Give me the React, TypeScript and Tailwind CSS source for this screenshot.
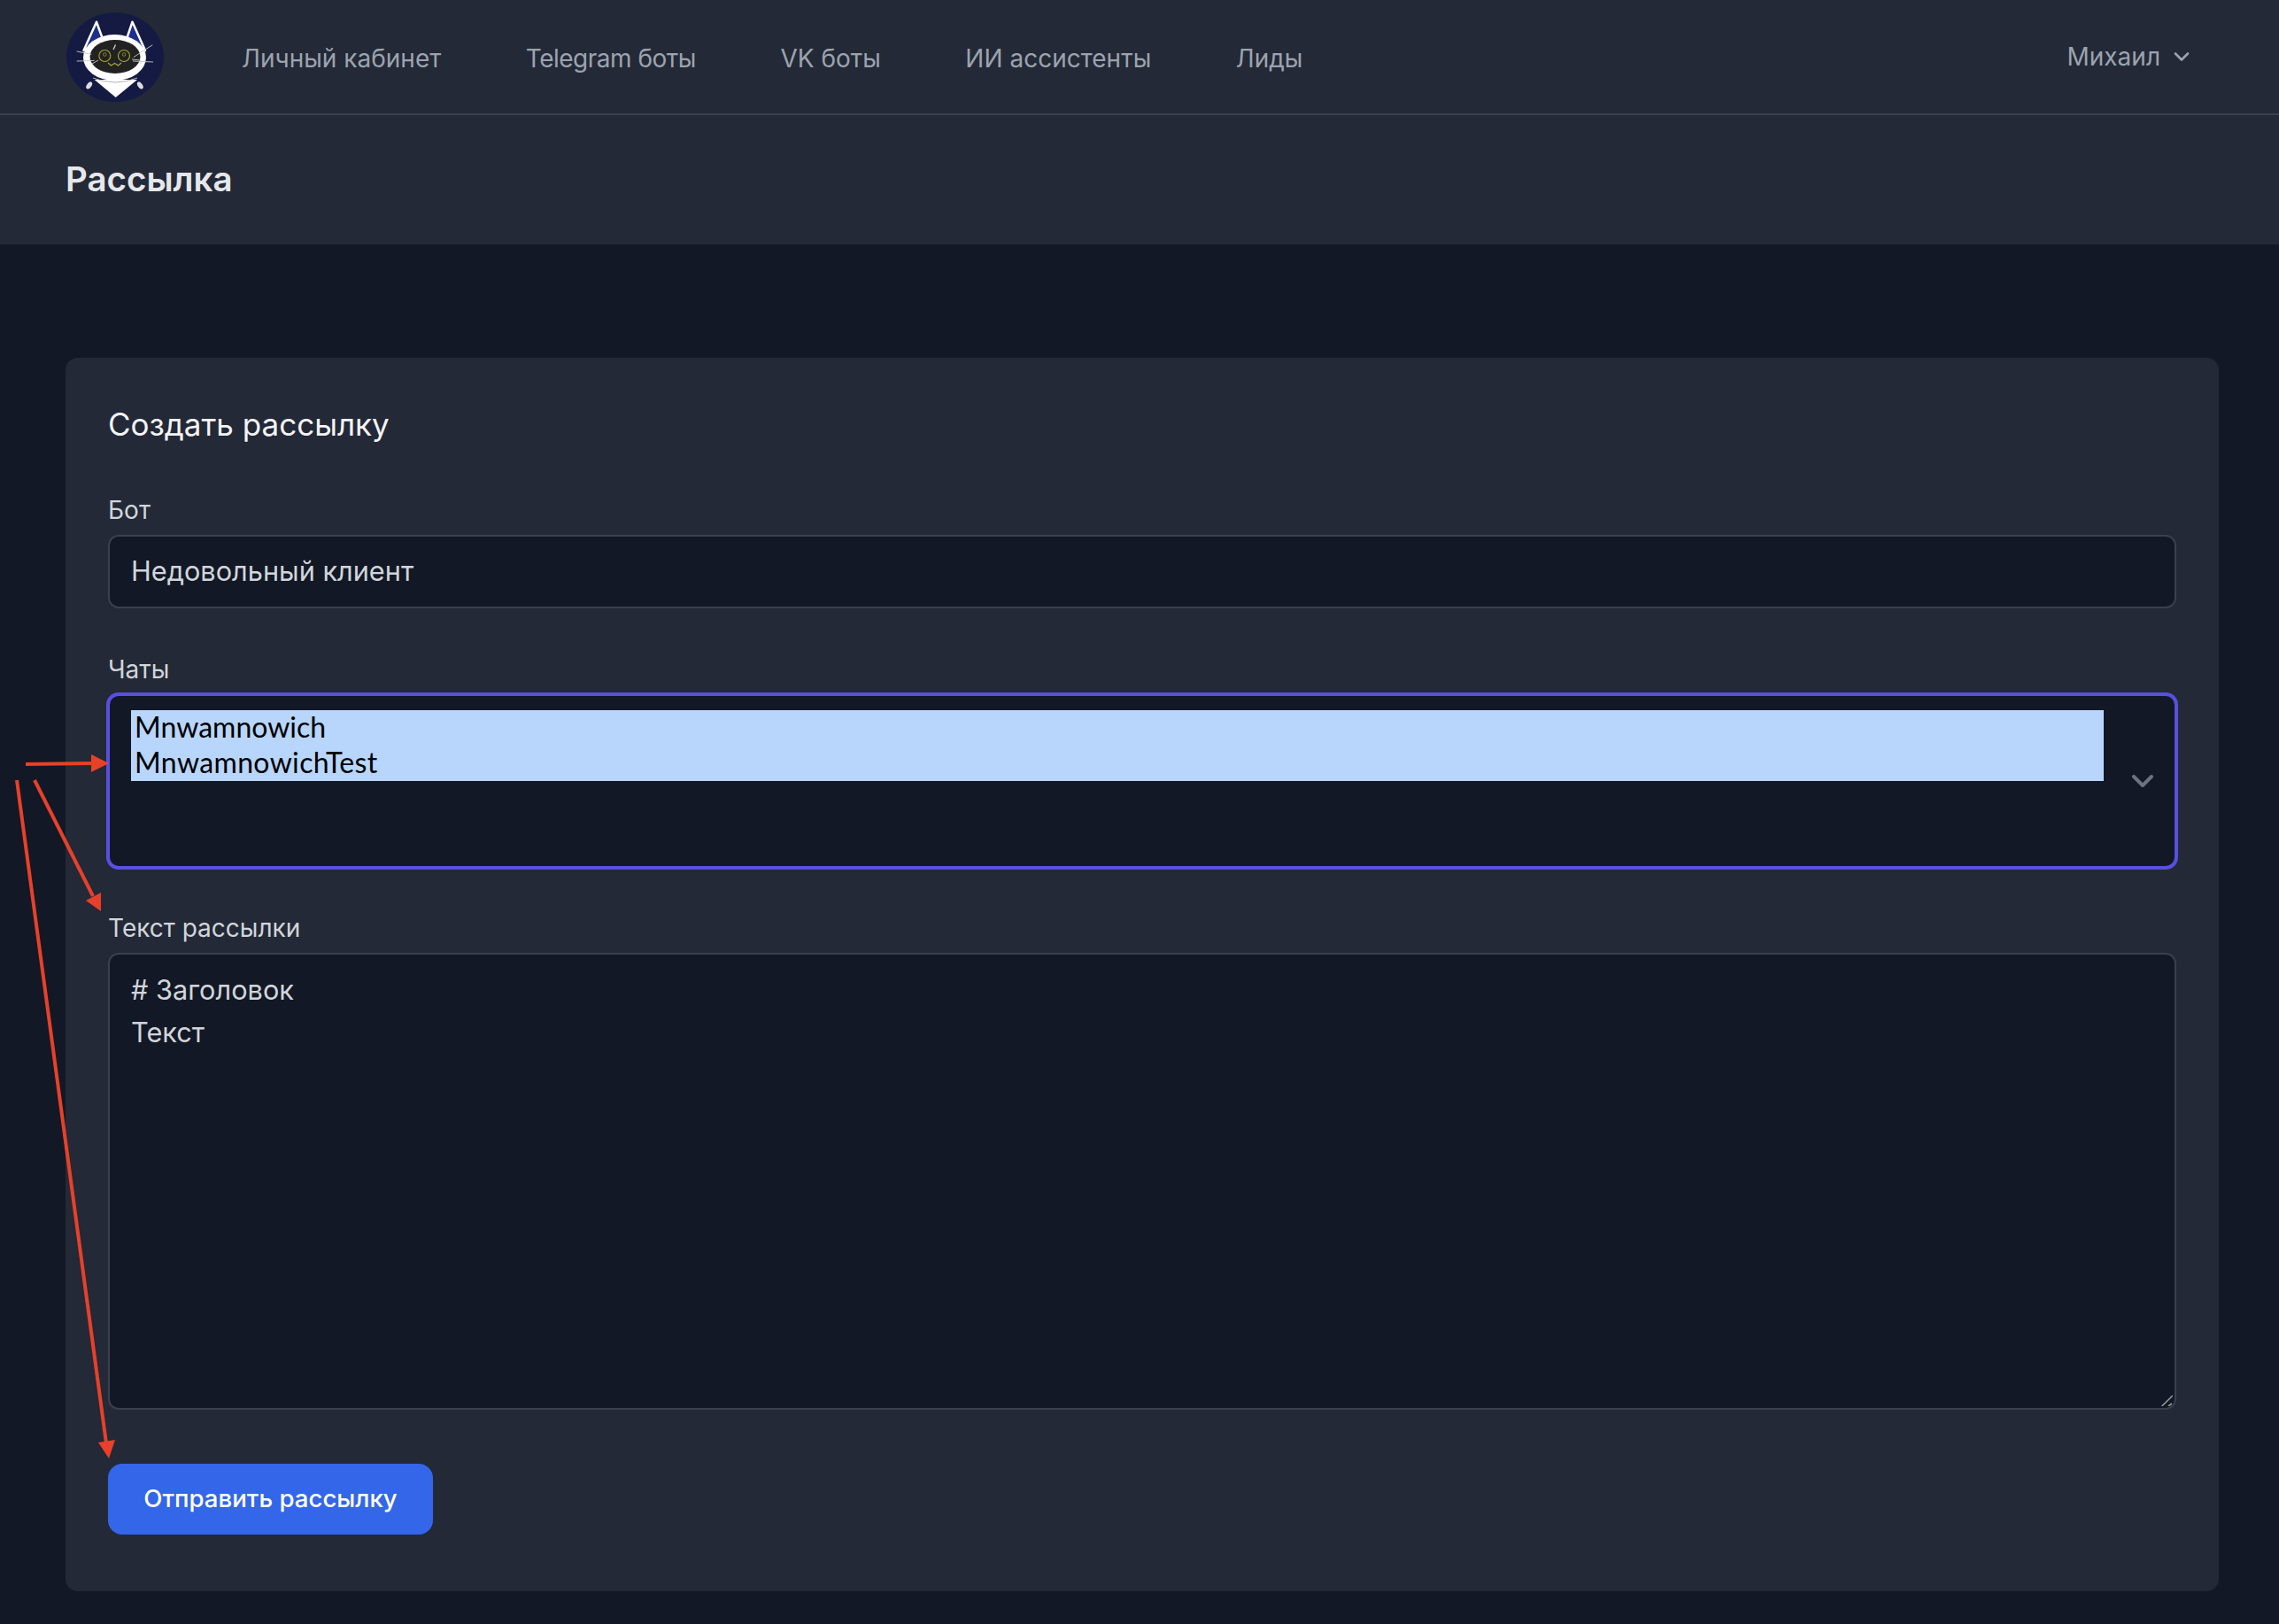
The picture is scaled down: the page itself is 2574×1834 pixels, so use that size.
const navItems = [
  { label: 'Личный кабинет', cls: '' },
  { label: 'Telegram боты', cls: 'tracking-[-0.5px]' },
  { label: 'VK боты', cls: '' },
  { label: 'ИИ ассистенты', cls: '' },
  { label: 'Лиды', cls: '' },
];

function Logo() {
  return (
    <svg viewBox="0 0 110 101" className="w-[110px] h-[101px] shrink-0">
      <ellipse cx="55" cy="50.5" rx="55" ry="50.5" fill="#151a42" />
      <path d="M19.5 43 L34 10.7 L41 30 Z" fill="#1c2f8f" stroke="#fff" strokeWidth="2.5" strokeLinejoin="round" />
      <path d="M89 43 L74.5 10.7 L68 30 Z" fill="#1c2f8f" stroke="#fff" strokeWidth="2.5" strokeLinejoin="round" />
      <path d="M31.7 76 L55.7 96 L80 76 Z" fill="#fff" />
      <ellipse cx="54.5" cy="51" rx="35.5" ry="26" fill="#fff" />
      <path d="M30 74 Q55 84 80 74" fill="none" stroke="#b5b5b5" strokeWidth="1" />
      <ellipse cx="55" cy="50" rx="28.5" ry="19" fill="#222222" />
      <circle cx="43.3" cy="49" r="6.5" fill="none" stroke="#a8a838" strokeWidth="1.1" />
      <circle cx="65" cy="49" r="6.5" fill="none" stroke="#a8a838" strokeWidth="1.1" />
      <circle cx="43.3" cy="47.5" r="1.8" fill="none" stroke="#a8a838" strokeWidth="0.7" />
      <circle cx="65" cy="47.5" r="1.8" fill="none" stroke="#a8a838" strokeWidth="0.7" />
      <path d="M47 57 L50.5 60 L54.5 57.5 L58.5 60 L62 57" fill="none" stroke="#a8a838" strokeWidth="1.1" />
      <path d="M11.7 44 L28.3 47.4 M11.7 55 L31.7 54.4 M29 58 L36 54 M75.7 50.7 L97.3 36.7 M75 55 L98 56 M74 53 L84 54 L84 58" fill="none" stroke="#c9c9c9" strokeWidth="0.9" />
      <path d="M53 42 L55.5 36.5" stroke="#c9c9c9" strokeWidth="1.4" />
      <ellipse cx="25.7" cy="82.4" rx="2.6" ry="4.6" fill="#ddd" transform="rotate(35 25.7 82.4)" />
      <ellipse cx="83.3" cy="82.4" rx="2.6" ry="4.6" fill="#ddd" transform="rotate(-35 83.3 82.4)" />
    </svg>
  );
}

function Annotations() {
  return (
    <svg className="absolute left-0 top-0 w-[200px] h-[1700px] pointer-events-none" viewBox="0 0 200 1700">
      <g stroke="#e8402a" strokeWidth="4" fill="none">
        <path d="M29 863 L105 862" />
        <path d="M39 881 L105 1012" />
        <path d="M19 881 L120 1630" />
      </g>
      <g fill="#e8402a">
        <path d="M103 852 L123 862 L103 872 Z" />
        <path d="M97 1017 L114 1008 L114 1029 Z" />
        <path d="M111 1629 L130 1626 L123 1647 Z" />
      </g>
    </svg>
  );
}

export default function App() {
  return (
    <div className="relative min-h-[1834px] bg-[#121825] font-['Inter',sans-serif]">
      <nav className="h-[130px] bg-[#232936] border-b-2 border-[#3a404d] pl-[75px] pr-[100px] flex items-center">
        <Logo />
        <div className="ml-[88px] flex gap-[95.5px] mt-[4px]">
          {navItems.map((item) => (
            <a key={item.label} className={`text-[28px] leading-[40px] text-[#9ca3af] ${item.cls}`}>{item.label}</a>
          ))}
        </div>
        <div className="ml-auto flex items-center gap-[14px] text-[#9ca3af] text-[28px]">
          <span>Михаил</span>
          <svg viewBox="0 0 20 20" className="w-[20px] h-[20px]" fill="none" stroke="currentColor" strokeWidth="2.6" strokeLinecap="round" strokeLinejoin="round">
            <path d="M3 6.5 L10 13.5 L17 6.5" />
          </svg>
        </div>
      </nav>

      <header className="h-[146px] bg-[#232936] pl-[74px] flex items-center">
        <h1 className="text-[38.5px] font-semibold text-[#e5e7eb]">Рассылка</h1>
      </header>

      <main className="pl-[74px] pr-[68px] pt-[128px]">
        <div className="h-[1393px] bg-[#232936] rounded-[14px] px-[48px] pt-[47px]">
          <h2 className="text-[35px] leading-[56px] font-normal text-[#f3f4f6]">Создать рассылку</h2>

          <label className="block mt-[49px] text-[28px] leading-[40px] text-[#d1d5db]">Бот</label>
          <div className="mt-[8px] h-[83px] bg-[#121825] border-2 border-[#3a404d] rounded-[12px] px-[24px] flex items-center text-[30.7px] text-[#d1d5db]">
            Недовольный клиент
          </div>

          <label className="block mt-[49px] text-[28px] leading-[40px] text-[#d1d5db]">Чаты</label>
          <div className="relative mt-[8px] h-[196px] bg-[#121825] rounded-[12px] border-2 border-[#5850e0] ring-2 ring-[#5850e0] pl-[24px] pt-[16px]">
            <div className="w-[2228px] font-['Lato',sans-serif] text-[32px] leading-[40px] text-black bg-[#b8d5fb]">
              <div className="pl-[4px] -translate-y-px">Mnwamnowich</div>
              <div className="pl-[4px] -translate-y-px tracking-[0.35px]">MnwamnowichTest</div>
            </div>
            <svg viewBox="0 0 24 14" className="absolute right-[24px] top-[89px] w-[24px] h-[14px]" fill="none" stroke="#6b7280" strokeWidth="4" strokeLinecap="round" strokeLinejoin="round">
              <path d="M2 2 L12 12 L22 2" />
            </svg>
          </div>

          <label className="block mt-[48px] text-[28px] leading-[40px] text-[#d1d5db]">Текст рассылки</label>
          <div className="relative mt-[8px] h-[516px] bg-[#121825] border-2 border-[#3a404d] rounded-[12px] px-[24px] pt-[16px] text-[30.7px] leading-[48px] text-[#d1d5db]">
            <div># Заголовок</div>
            <div>Текст</div>
            <svg viewBox="0 0 16 16" className="absolute right-[2px] bottom-[2px] w-[16px] h-[16px]" fill="none" stroke="#9a9a9a" strokeWidth="1.6">
              <path d="M3.7 16 L16 4 M11 16 L15 13" />
            </svg>
          </div>

          <button className="block mt-[61px] h-[80px] w-[367px] bg-[#3366e8] rounded-[16px] text-[27.6px] font-medium text-white">
            Отправить рассылку
          </button>
        </div>
      </main>
      <Annotations />
    </div>
  );
}
